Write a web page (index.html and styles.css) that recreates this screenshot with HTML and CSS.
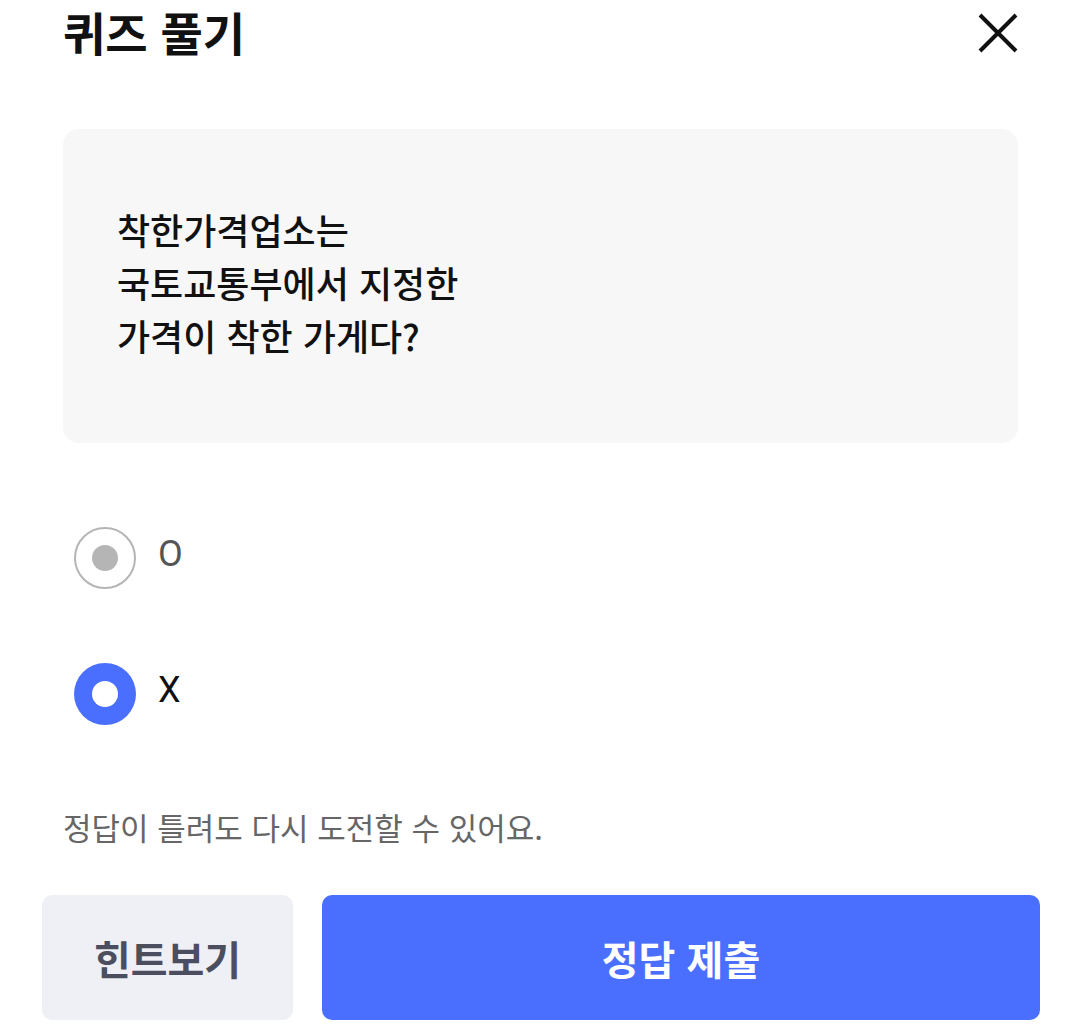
FILE: index.html
```html
<!DOCTYPE html>
<html lang="ko">
<head>
<meta charset="utf-8">
<title>퀴즈 풀기</title>
<link rel="stylesheet" href="styles.css">
</head>
<body>
<div class="screen">
  <header class="header">
    <h1 class="title">퀴즈 풀기</h1>
    <button class="close" aria-label="닫기">
      <svg width="40" height="40" viewBox="0 0 40 40"><path d="M2 2 L38 38 M38 2 L2 38" stroke="#111" stroke-width="4" fill="none"/></svg>
    </button>
  </header>

  <section class="question">
    <p>착한가격업소는<br>국토교통부에서 지정한<br>가격이 착한 가게다?</p>
  </section>

  <div class="options">
    <label class="option">
      <span class="radio radio-off"></span>
      <span class="opt-label muted">O</span>
    </label>
    <label class="option">
      <span class="radio radio-on"></span>
      <span class="opt-label">X</span>
    </label>
  </div>

  <p class="helper">정답이 틀려도 다시 도전할 수 있어요.</p>

  <div class="actions">
    <button class="btn btn-hint">힌트보기</button>
    <button class="btn btn-submit">정답 제출</button>
  </div>
</div>
</body>
</html>
```

FILE: styles.css
```css
* { box-sizing: border-box; }
html, body {
  margin: 0;
  padding: 0;
  background: #fff;
  font-family: "Noto Sans CJK KR", "Noto Sans", sans-serif;
}
.screen {
  width: 1080px;
  height: 1030px;
  display: flex;
  flex-direction: column;
}
.header {
  display: flex;
  align-items: center;
  justify-content: space-between;
  padding: 0 62px 0 63px;
  height: 66px;
}
.title {
  margin: 0;
  font-size: 46px;
  font-weight: 700;
  line-height: 1;
  color: #111;
  margin-top: -4px;
}
.close {
  border: 0;
  background: none;
  padding: 0;
  width: 40px;
  height: 40px;
  display: flex;
}
.question {
  margin: 63px 62px 0 63px;
  height: 314px;
  background: #f7f7f7;
  border-radius: 16px;
  display: flex;
  align-items: center;
  padding: 0 54px;
}
.question p {
  margin: 0 0 8px;
  font-size: 36px;
  font-weight: 500;
  line-height: 53px;
  color: #111;
}
.options {
  margin: 84px 0 0 74px;
  display: flex;
  flex-direction: column;
  gap: 74px;
}
.option {
  display: flex;
  align-items: center;
  gap: 22px;
  height: 62px;
}
.radio {
  width: 62px;
  height: 62px;
  border-radius: 50%;
  display: flex;
  align-items: center;
  justify-content: center;
  flex: none;
}
.radio::after {
  content: "";
  width: 26px;
  height: 26px;
  border-radius: 50%;
}
.radio-off {
  border: 2px solid #b5b5b5;
}
.radio-off::after {
  background: #b5b5b5;
}
.radio-on {
  background: #4a6fff;
}
.radio-on::after {
  background: #fff;
}
.opt-label {
  font-family: Roboto, "Noto Sans CJK KR", sans-serif;
  font-size: 36px;
  color: #111;
  margin-top: -8px;
}
.opt-label.muted {
  color: #555;
}
.helper {
  margin: 80px 0 0 63px;
  font-size: 31px;
  color: #666;
  line-height: 44px;
}
.actions {
  margin: 46px 40px 0 42px;
  display: flex;
  gap: 29px;
}
.btn {
  border: 0;
  border-radius: 10px;
  height: 125px;
  font-family: "Noto Sans CJK KR", sans-serif;
  font-weight: 700;
  font-size: 40px;
  padding: 0;
}
.btn-hint {
  width: 251px;
  background: #eff0f5;
  color: #4b4e5f;
}
.btn-submit {
  flex: 1;
  background: #4a6fff;
  color: #fff;
}
```
